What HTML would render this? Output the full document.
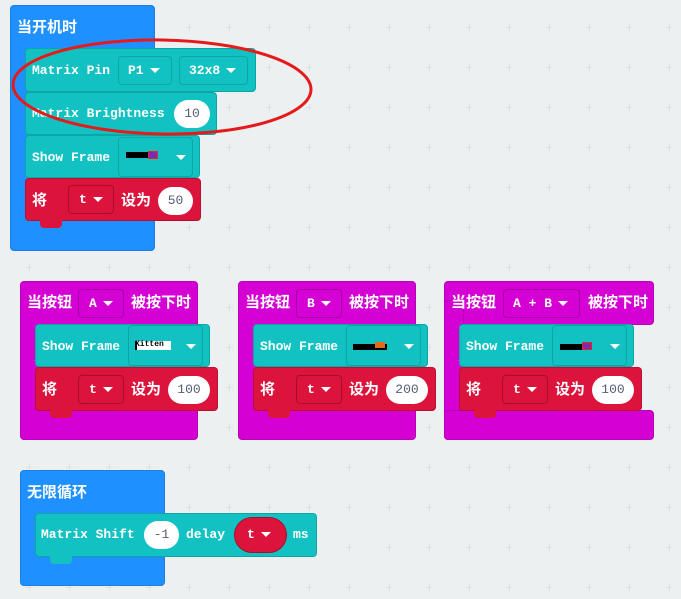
<!DOCTYPE html>
<html><head><meta charset="utf-8"><style>
*{margin:0;padding:0;box-sizing:border-box}
body{width:681px;height:599px;overflow:hidden;background:#ecf0f1;position:relative;
font-family:"Liberation Sans","Noto Sans CJK SC",sans-serif}
.a{position:absolute}
.blue{background:#1e90ff;border:1px solid #1a7fe0;border-radius:4px}
.pur{background:#d400d4;border:1px solid #b800b8;border-radius:4px}
.teal{background:#12c2c2;border:1px solid #0ea5a5;border-radius:4px}
.red{background:#dc143c;border:1px solid #b71033;border-radius:4px}
.t{position:absolute;color:#fff;font-weight:bold;font-size:13px;font-family:"Liberation Mono",monospace;white-space:nowrap;line-height:16px}
.c{position:absolute;color:#fff;font-weight:bold;font-size:15px;font-family:"Liberation Sans","Noto Sans CJK SC",sans-serif;white-space:nowrap;line-height:18px}
.dd{position:absolute;border:1px solid rgba(0,0,0,.15);border-radius:4px}
.ddt{background:#12c2c2;border-color:#0ea5a5}
.ddr{background:#dc143c;border-color:#a50e2d}
.ddp{background:#d400d4;border-color:#a800a8}
.ov{position:absolute;background:#fff;border-radius:16px;color:#575e75;font-family:"Liberation Mono",monospace;font-size:13px;text-align:center;line-height:28px;height:28px}
.tri{display:inline-block;width:0;height:0;border-left:5px solid transparent;border-right:5px solid transparent;border-top:5px solid #fff;vertical-align:middle;margin-left:6px}
.tab{position:absolute;width:22px;height:8px;border-radius:0 0 4px 4px}
.p{position:absolute;width:7px;height:7px}
.p:before{content:"";position:absolute;left:3px;top:0;width:1px;height:7px;background:#dde1e3}
.p:after{content:"";position:absolute;top:3px;left:0;width:7px;height:1px;background:#dde1e3}
</style></head><body>
<div id="grid"></div>
<script>
var g=document.getElementById('grid'),h='';
for(var x=29;x<681;x+=40)for(var y=27;y<599;y+=40)h+='<div class="p" style="left:'+(x-3)+'px;top:'+(y-3)+'px"></div>';
g.innerHTML=h;
</script>

<!-- on start -->
<div class="a blue" style="left:10px;top:5px;width:145px;height:246px"></div>
<div class="c" style="left:17px;top:19px">当开机时</div>
<div class="a teal" style="left:25px;top:48px;width:231px;height:44px"></div>
<div class="t" style="left:32px;top:63px">Matrix Pin</div>
<div class="dd ddt" style="left:118px;top:56px;width:54px;height:29px"><span class="t" style="left:9px;top:6px">P1<span class="tri"></span></span></div>
<div class="dd ddt" style="left:179px;top:56px;width:69px;height:29px"><span class="t" style="left:9px;top:6px">32x8<span class="tri"></span></span></div>
<div class="a teal" style="left:25px;top:92px;width:192px;height:43px"></div>
<div class="t" style="left:32px;top:106px">Matrix Brightness</div>
<div class="ov" style="left:174px;top:100px;width:36px">10</div>
<div class="a teal" style="left:25px;top:135px;width:175px;height:43px"></div>
<div class="t" style="left:32px;top:150px">Show Frame</div>
<div class="dd ddt" style="left:118px;top:137px;width:75px;height:40px"><div class="a" style="left:7px;top:14px;width:22px;height:6px;background:#000"></div><div class="a" style="left:29px;top:13px;width:10px;height:8px;border:1px solid #e22;background:#7a2bb0"></div><span class="tri a" style="left:51px;top:17px"></span></div>
<div class="a red" style="left:25px;top:178px;width:176px;height:43px"></div>
<div class="tab" style="left:40px;top:220px;background:#dc143c"></div>
<div class="c" style="left:32px;top:192px">将</div>
<div class="dd ddr" style="left:68px;top:185px;width:46px;height:29px"><span class="t" style="left:10px;top:6px">t<span class="tri"></span></span></div>
<div class="c" style="left:121px;top:192px">设为</div>
<div class="ov" style="left:158px;top:187px;width:35px">50</div>

<!-- ellipse -->
<svg class="a" style="left:0;top:0" width="330" height="150"><ellipse cx="162" cy="87" rx="149" ry="47" transform="rotate(1 162 87)" fill="none" stroke="#e51a1a" stroke-width="3"/></svg>

<!-- button A -->
<div class="a pur" style="left:20px;top:281px;width:178px;height:159px"></div>
<div class="c" style="left:27px;top:294px">当按钮</div>
<div class="dd ddp" style="left:78px;top:289px;width:46px;height:29px"><span class="t" style="left:10px;top:6px">A<span class="tri"></span></span></div>
<div class="c" style="left:131px;top:294px">被按下时</div>
<div class="a teal" style="left:35px;top:324px;width:175px;height:43px"></div>
<div class="t" style="left:42px;top:339px">Show Frame</div>
<div class="dd ddt" style="left:128px;top:325px;width:75px;height:41px"><div class="a" style="left:6px;top:15px;width:36px;height:9px;background:#fff;border-left:2px solid #000"></div><span class="a" style="left:6px;top:14px;font:bold 8px 'Liberation Mono',monospace;color:#000">Kitten</span><span class="tri a" style="left:51px;top:18px"></span></div>
<div class="a red" style="left:35px;top:367px;width:183px;height:44px"></div>
<div class="tab" style="left:50px;top:410px;background:#dc143c"></div>
<div class="c" style="left:42px;top:381px">将</div>
<div class="dd ddr" style="left:78px;top:375px;width:46px;height:29px"><span class="t" style="left:10px;top:6px">t<span class="tri"></span></span></div>
<div class="c" style="left:131px;top:381px">设为</div>
<div class="ov" style="left:168px;top:376px;width:42px">100</div>

<!-- button B -->
<div class="a pur" style="left:238px;top:281px;width:178px;height:159px"></div>
<div class="c" style="left:245px;top:294px">当按钮</div>
<div class="dd ddp" style="left:296px;top:289px;width:46px;height:29px"><span class="t" style="left:10px;top:6px">B<span class="tri"></span></span></div>
<div class="c" style="left:349px;top:294px">被按下时</div>
<div class="a teal" style="left:253px;top:324px;width:175px;height:43px"></div>
<div class="t" style="left:260px;top:339px">Show Frame</div>
<div class="dd ddt" style="left:346px;top:325px;width:75px;height:41px"><div class="a" style="left:6px;top:18px;width:34px;height:6px;background:#000"></div><div class="a" style="left:28px;top:16px;width:10px;height:6px;background:#e36a1b"></div><span class="tri a" style="left:51px;top:18px"></span></div>
<div class="a red" style="left:253px;top:367px;width:183px;height:44px"></div>
<div class="tab" style="left:268px;top:410px;background:#dc143c"></div>
<div class="c" style="left:260px;top:381px">将</div>
<div class="dd ddr" style="left:296px;top:375px;width:46px;height:29px"><span class="t" style="left:10px;top:6px">t<span class="tri"></span></span></div>
<div class="c" style="left:349px;top:381px">设为</div>
<div class="ov" style="left:386px;top:376px;width:42px">200</div>

<!-- button A+B -->
<div class="a pur" style="left:444px;top:281px;width:210px;height:44px"></div>
<div class="a pur" style="left:444px;top:300px;width:20px;height:140px;border-radius:4px 0 0 4px"></div>
<div class="a pur" style="left:444px;top:410px;width:210px;height:30px"></div>
<div class="c" style="left:451px;top:294px">当按钮</div>
<div class="dd ddp" style="left:503px;top:289px;width:77px;height:29px"><span class="t" style="left:9px;top:6px">A + B<span class="tri"></span></span></div>
<div class="c" style="left:588px;top:294px">被按下时</div>
<div class="a teal" style="left:459px;top:324px;width:175px;height:43px"></div>
<div class="t" style="left:466px;top:339px">Show Frame</div>
<div class="dd ddt" style="left:552px;top:325px;width:75px;height:41px"><div class="a" style="left:7px;top:18px;width:22px;height:6px;background:#000"></div><div class="a" style="left:29px;top:16px;width:10px;height:8px;border:1px solid #e22;background:#7a2bb0"></div><span class="tri a" style="left:51px;top:18px"></span></div>
<div class="a red" style="left:459px;top:367px;width:183px;height:44px"></div>
<div class="tab" style="left:474px;top:410px;background:#dc143c"></div>
<div class="c" style="left:466px;top:381px">将</div>
<div class="dd ddr" style="left:502px;top:375px;width:46px;height:29px"><span class="t" style="left:10px;top:6px">t<span class="tri"></span></span></div>
<div class="c" style="left:555px;top:381px">设为</div>
<div class="ov" style="left:592px;top:376px;width:42px">100</div>

<!-- forever -->
<div class="a blue" style="left:20px;top:470px;width:145px;height:116px"></div>
<div class="c" style="left:27px;top:484px">无限循环</div>
<div class="a teal" style="left:35px;top:513px;width:282px;height:44px"></div>
<div class="tab" style="left:50px;top:556px;background:#12c2c2"></div>
<div class="t" style="left:41px;top:527px">Matrix Shift</div>
<div class="ov" style="left:144px;top:521px;width:35px">-1</div>
<div class="t" style="left:186px;top:527px">delay</div>
<div class="a" style="left:234px;top:517px;width:53px;height:36px;background:#dc143c;border:1px solid #a50e2d;border-radius:18px"><span class="t" style="left:12px;top:9px">t<span class="tri"></span></span></div>
<div class="t" style="left:293px;top:527px">ms</div>
</body></html>
